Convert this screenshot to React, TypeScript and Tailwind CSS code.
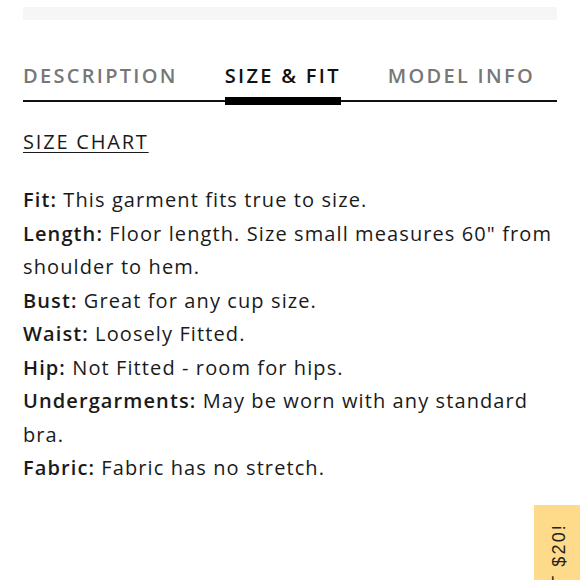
import React, { useState } from 'react';

const tabs = ['DESCRIPTION', 'SIZE & FIT', 'MODEL INFO'];

const specs: { label: string; value: string }[] = [
  { label: 'Fit:', value: 'This garment fits true to size.' },
  { label: 'Length:', value: 'Floor length. Size small measures 60" from shoulder to hem.' },
  { label: 'Bust:', value: 'Great for any cup size.' },
  { label: 'Waist:', value: 'Loosely Fitted.' },
  { label: 'Hip:', value: 'Not Fitted - room for hips.' },
  { label: 'Undergarments:', value: 'May be worn with any standard bra.' },
  { label: 'Fabric:', value: 'Fabric has no stretch.' },
];

export default function App() {
  const [active, setActive] = useState(1);

  return (
    <div className="relative w-[580px] h-[580px] overflow-hidden bg-white text-[#1a1a1a] font-['Open_Sans','Liberation_Sans',sans-serif]">
      <div className="px-[23px] pt-[7px]">
        <div className="h-[13px] bg-[#f6f6f6]" />

        {/* tabs */}
        <div className="mt-[44px] flex justify-between border-b-2 border-[#111] pr-[22px]">
          {tabs.map((t, i) => (
            <button
              key={t}
              onClick={() => setActive(i)}
              className={`relative pb-[12px] text-[20px] leading-[24px] font-semibold tracking-[0.115em] ${
                i === active ? 'text-[#111]' : 'text-[#777]'
              }`}
            >
              {t}
              {i === active && <span className="absolute left-0 right-0 bottom-[-5px] h-[8px] bg-black" />}
            </button>
          ))}
        </div>

        <div className="mt-[28px]">
          <a className="text-[20px] leading-[24px] underline underline-offset-[3px] decoration-1 tracking-[0.09em]">SIZE CHART</a>
        </div>

        <div className="mt-[28px] text-[20px] leading-[33.5px] tracking-[0.055em]">
          {specs.map((s) => (
            <p key={s.label}>
              <span className="font-semibold">{s.label}</span> {s.value}
            </p>
          ))}
        </div>
      </div>

      {/* promo tab */}
      <div className="absolute left-[534px] top-[505px] w-[50px] h-[120px] bg-[#fddb8a] flex items-start justify-center">
        <span className="mt-[18px] [writing-mode:vertical-rl] rotate-180 text-[18px] leading-none tracking-[0.12em] text-[#222] font-['Liberation_Sans',sans-serif] whitespace-nowrap">
          GET $20!
        </span>
      </div>
    </div>
  );
}
